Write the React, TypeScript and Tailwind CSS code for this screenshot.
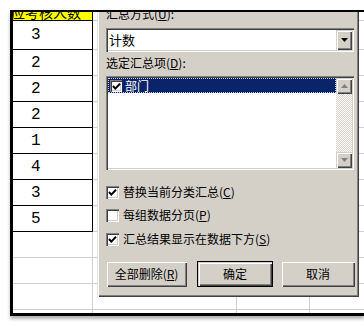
import React from "react";

const cjk = { fontFamily: '"Noto Sans CJK SC", "Noto Sans", sans-serif' };

const sunken =
  "shadow-[inset_1px_1px_0_#808080,inset_2px_2px_0_#404040,inset_-1px_-1px_0_#ffffff,inset_-2px_-2px_0_#d4d0c8]";
const raised =
  "shadow-[inset_1px_1px_0_#d4d0c8,inset_2px_2px_0_#ffffff,inset_-1px_-1px_0_#404040,inset_-2px_-2px_0_#808080]";

function Check() {
  return (
    <svg width="13" height="13" viewBox="0 0 13 13" className="absolute left-0 top-0">
      <polyline points="3,6 5.3,8.6 10,3.8" fill="none" stroke="#000" strokeWidth="2" />
    </svg>
  );
}

function Box({ checked, small }: { checked?: boolean; small?: boolean }) {
  return (
    <div
      className={`relative shrink-0 bg-white ${small ? "w-[12px] h-[12px]" : "w-[13px] h-[13px]"} ${sunken}`}
    >
      {checked && <Check />}
    </div>
  );
}

function Option({ label, k, checked, className }: { label: string; k: string; checked?: boolean; className: string }) {
  return (
    <div className={`flex items-center h-[16px] ${className}`}>
      <Box checked={checked} />
      <span className="ml-[4px] text-[12px] leading-[16px] text-black whitespace-nowrap" style={cjk}>
        {label}(<span className="underline underline-offset-1">{k}</span>)
      </span>
    </div>
  );
}

function Btn({ children, w, def, className }: { children: React.ReactNode; w: string; def?: boolean; className?: string }) {
  return (
    <div
      className={`${w} h-[26px] bg-[#d4d0c8] flex items-center justify-center text-[12px] text-black ${
        def ? "border border-black" : ""
      } ${raised} ${className ?? ""}`}
      style={cjk}
    >
      {children}
    </div>
  );
}

function Arrow({ up }: { up?: boolean }) {
  return (
    <svg width="7" height="4" viewBox="0 0 7 4">
      {up ? <polygon points="0,4 7,4 3.5,0" fill="#808080" /> : <polygon points="0,0 7,0 3.5,4" fill="#808080" />}
    </svg>
  );
}

const rowsData = ["3", "2", "2", "2", "1", "4", "3", "5"];

function SheetRow({
  h,
  dark,
  yellow,
  children,
}: {
  h: string;
  dark?: boolean;
  yellow?: boolean;
  children?: React.ReactNode;
}) {
  return (
    <div className={`flex ${h} shrink-0`}>
      <div
        className={`w-[80px] shrink-0 border-r border-b overflow-hidden ${
          dark ? "border-black" : "border-[#d0d0d0]"
        } ${yellow ? "bg-[#ffff00]" : "bg-white"}`}
      >
        {children}
      </div>
      <div className="w-[144px] shrink-0 border-r border-b border-[#d0d0d0]" />
      <div className="w-[73px] shrink-0 border-r border-b border-[#d0d0d0]" />
      <div className="flex-1 border-b border-[#d0d0d0]" />
    </div>
  );
}

export default function App() {
  return (
    <div className="w-[364px] h-[327px] bg-white pl-[10px] pt-[10px] overflow-hidden">
      <div className="relative w-[354px] h-[306px] border-t-2 border-l-[3px] border-b-[3px] border-black shadow-[0_3px_3px_rgba(0,0,0,0.3)] bg-white overflow-hidden">
        {/* spreadsheet */}
        <div className="flex flex-col">
          <SheetRow h="h-[9px]" dark yellow>
            <div className="-mt-[7px] -ml-[2px] text-[14px] leading-[14px] text-black whitespace-nowrap" style={cjk}>
              应考核人数
            </div>
          </SheetRow>
          {rowsData.map((d, i) => (
            <SheetRow key={i} h={i === 0 ? "h-[29px]" : "h-[26px]"} dark>
              <div
                className="h-full flex items-center pl-[18px] text-[16px] text-black"
                style={{ fontFamily: '"Liberation Mono", monospace' }}
              >
                {d}
              </div>
            </SheetRow>
          ))}
          <SheetRow h="h-[26px]" />
          <SheetRow h="h-[26px]" />
          <SheetRow h="h-[26px]" />
          <SheetRow h="h-[26px]" />
        </div>

        {/* dialog */}
        <div
          className={`absolute left-[84px] top-0 w-[262px] h-[285px] bg-[#d4d0c8] overflow-hidden pl-[9px] flex flex-col shadow-[inset_1px_0_0_#e8e6e2,inset_2px_0_0_#ffffff,inset_-1px_-1px_0_#404040,inset_-2px_-2px_0_#808080]`}
        >
          <div className="-mt-[5px] h-[14px] text-[12px] leading-[14px] text-black whitespace-nowrap" style={cjk}>
            汇总方式(<span className="underline underline-offset-1">U</span>):
          </div>
          {/* combo */}
          <div className={`mt-[7px] w-[248px] h-[24px] bg-white flex items-center justify-between pl-[3px] pr-[2px] ${sunken}`}>
            <span className="text-[13px] text-black" style={cjk}>
              计数
            </span>
            <div className={`w-[16px] h-[20px] bg-[#d4d0c8] flex items-center justify-center ${raised}`}>
              <svg width="7" height="4" viewBox="0 0 7 4">
                <polygon points="0,0 7,0 3.5,4" fill="#000" />
              </svg>
            </div>
          </div>
          <div className="mt-[4px] h-[14px] text-[12px] leading-[14px] text-black whitespace-nowrap" style={cjk}>
            选定汇总项(<span className="underline underline-offset-1">D</span>):
          </div>
          {/* listbox */}
          <div className={`mt-[6px] w-[248px] h-[94px] bg-white p-[2px] flex ${sunken}`}>
            <div className="flex-1">
              <div className="h-[15px] bg-[#0a246a] border border-dotted border-[#c8c8ff] flex items-center pl-[1px]">
                <Box checked small />
                <span className="ml-[3px] text-[12px] leading-[13px] text-white" style={cjk}>
                  部门
                </span>
              </div>
            </div>
            <div className="w-[16px] flex flex-col">
              <div className={`h-[16px] bg-[#d4d0c8] flex items-center justify-center ${raised}`}>
                <Arrow up />
              </div>
              <div className="flex-1 bg-[image:repeating-conic-gradient(#d4d0c8_0%_25%,#ffffff_0%_50%)] bg-[length:2px_2px]" />
              <div className={`h-[16px] bg-[#d4d0c8] flex items-center justify-center ${raised}`}>
                <Arrow />
              </div>
            </div>
          </div>
          <Option className="mt-[14px]" label="替换当前分类汇总" k="C" checked />
          <Option className="mt-[7px]" label="每组数据分页" k="P" />
          <Option className="mt-[8px]" label="汇总结果显示在数据下方" k="S" checked />
          <div className="mt-[14px] flex">
            <Btn w="w-[81px]">
              全部删除(<span className="underline underline-offset-1">R</span>)
            </Btn>
            <Btn w="w-[76px]" def className="ml-[10px]">
              确定
            </Btn>
            <Btn w="w-[74px]" className="ml-[8px]">
              取消
            </Btn>
          </div>
        </div>
      </div>
    </div>
  );
}
